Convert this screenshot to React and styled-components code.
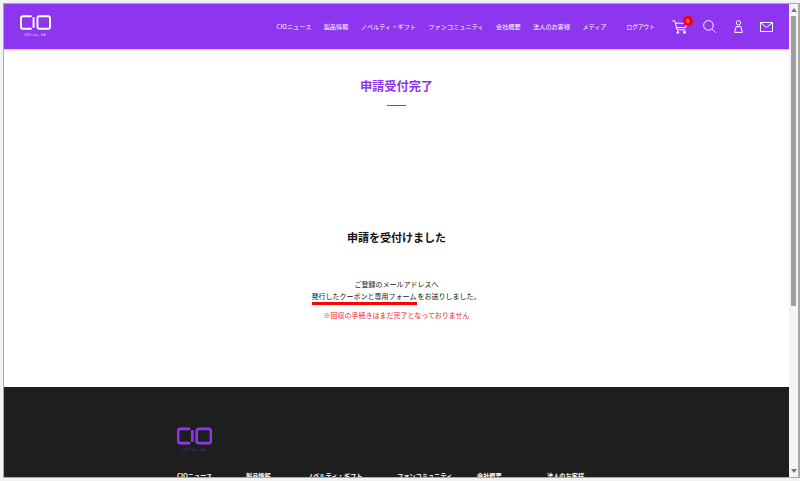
import React from 'react'
import styled, { createGlobalStyle } from 'styled-components'

const Global = createGlobalStyle`
html, body { margin: 0; padding: 0; height: 100%; overflow: hidden; background: #fff; }
body { font-family: "Noto Sans CJK JP", "Liberation Sans", sans-serif; }
`
const Frame = styled.div`
width: 800px;
height: 481px;
box-sizing: border-box;
padding: 3px 0 3px 3px;
background: #f2f2f2;
`
const Window = styled.div`
height: 100%;
box-sizing: border-box;
display: flex;
border: solid #a9a9a9;
border-width: 1px 2px 1px 1px;
background: #fff;
`
const Page = styled.div`
flex: 1;
min-width: 0;
display: flex;
flex-direction: column;
overflow: hidden;
`
const Header = styled.header`
flex: none;
height: 45px;
display: flex;
align-items: center;
justify-content: space-between;
padding: 0 16px 0 16px;
background: #8e35ef;
box-shadow: 0 1px 2px rgba(0,0,0,.25);
`
const LogoBox = styled.div`
display: flex;
flex-direction: column;
align-items: center;
gap: ${p => p.$gap}px;
color: ${p => p.$color};
`
const LogoText = styled.span`
font-size: ${p => p.$size}px;
line-height: 1;
letter-spacing: .2px;
white-space: nowrap;
font-family: "Liberation Sans", sans-serif;
opacity: .9;
`
const Nav = styled.nav`
display: flex;
align-items: center;
`
const NavItem = styled.a`
font-size: 6.2px;
line-height: 10px;
margin-right: 12.3px;
color: #fff;
white-space: nowrap;
`
const LogoutItem = styled(NavItem)`
font-size: 5.7px;
margin-left: 7.5px;
margin-right: 17px;
`
const IconRow = styled.div`
display: flex;
align-items: center;
`
const IconWrap = styled.span`
position: relative;
display: flex;
margin-left: ${p => p.$left || 0}px;
`
const Badge = styled.span`
position: absolute;
top: -4px;
right: -5px;
width: 10px;
height: 10px;
border-radius: 50%;
background: #f00;
color: #fff;
font-size: 5px;
line-height: 10px;
text-align: center;
`
const Main = styled.main`
flex: 1;
min-height: 0;
display: flex;
flex-direction: column;
align-items: center;
`
const Title = styled.h1`
margin: 28px 0 0;
font-size: 12.2px;
line-height: 18px;
font-weight: 700;
color: #8e35ef;
`
const Divider = styled.div`
width: 19px;
height: 1px;
margin-top: 10px;
background: #8e35ef;
`
const Heading = styled.h2`
margin: 123px 0 0;
font-size: 11px;
line-height: 16px;
font-weight: 700;
color: #111;
`
const Message = styled.p`
margin: 33px 0 0;
font-size: 7px;
line-height: 12px;
text-align: center;
color: #111;
`
const Marked = styled.span`
padding: 0 1px 1px 0;
margin-left: -1px;
border-bottom: 3px solid #f00;
`
const Notice = styled.p`
margin: 7px 0 0;
font-size: 7px;
line-height: 12px;
color: #f0202a;
`
const Footer = styled.footer`
flex: none;
height: 90px;
box-sizing: border-box;
padding: 40px 0 0 173px;
background: #1e1e1e;
overflow: hidden;
`
const FooterLogo = styled(LogoBox)`
align-self: flex-start;
width: 35px;
`
const FooterNav = styled.div`
display: grid;
grid-template-columns: 69px 61px 90px 80px 70px auto;
margin-top: 19px;
`
const FooterItem = styled.a`
font-size: 6.2px;
line-height: 10px;
font-weight: 700;
color: #fff;
white-space: nowrap;
`
const Scrollbar = styled.div`
flex: none;
width: 9px;
display: flex;
flex-direction: column;
align-items: center;
background: #f4f4f4;
`
const Arrow = styled.span`
flex: none;
width: 0;
height: 0;
margin: 4px 0;
border-left: 3px solid transparent;
border-right: 3px solid transparent;
border-${p => p.$down ? 'top' : 'bottom'}: 4px solid #777;
`
const Thumb = styled.div`
flex: none;
width: 5px;
height: 290px;
background: #a0a0a0;
`
const Track = styled.div`
flex: 1;
`

const Logo = ({ color, width, height, weight = 2 }) => (
  <svg width={width} height={height} viewBox="0 0 32 15" fill="none" stroke={color} strokeWidth={weight}>
    <path d="M12 1H3Q1 1 1 3V12Q1 14 3 14H12" />
    <path d="M14 2V13" />
    <rect x="18" y="1" width="13" height="13" rx="2" />
  </svg>
)

const Cart = () => (
  <svg width="16" height="14" viewBox="0 0 16 14" fill="none" stroke="#fff" strokeWidth="1">
    <path d="M.3 .8H2.8L5 9.8H13.5" />
    <path d="M3.4 3.2H15L13.5 7.6H4.5" />
    <circle cx="5.8" cy="12.3" r="1" fill="#fff" />
    <circle cx="12.5" cy="12.3" r="1" fill="#fff" />
  </svg>
)
const Search = () => (
  <svg width="13" height="13" viewBox="0 0 13 13" fill="none" stroke="#fff" strokeWidth="1">
    <circle cx="5.4" cy="5.4" r="4.8" />
    <path d="M8.9 8.9L12.7 12.7" />
  </svg>
)
const User = () => (
  <svg width="9" height="13" viewBox="0 0 9 13" fill="none" stroke="#fff" strokeWidth="1">
    <circle cx="4.5" cy="2.8" r="2.2" />
    <path d="M2.2 6.6H6.8L8.4 12.4H.6Z" />
  </svg>
)
const Mail = () => (
  <svg width="13" height="10" viewBox="0 0 13 10" fill="none" stroke="#fff" strokeWidth="1">
    <rect x=".5" y=".5" width="12" height="9" />
    <path d="M.5 .7L6.5 5.4L12.5 .7" />
  </svg>
)

const navLinks = ['CIOニュース', '製品情報', 'ノベルティ・ギフト', 'ファンコミュニティ', '会社概要', '法人のお客様', 'メディア']

export default function App() {
  return (
    <Frame>
      <Global />
      <Window>
        <Page>
          <Header>
            <LogoBox $gap={4} $color="#fff">
              <Logo color="#fff" width={31} height={15} />
              <LogoText $size={3.8}>CIO co., ltd.</LogoText>
            </LogoBox>
            <Nav>
              {navLinks.map(l => <NavItem key={l}>{l}</NavItem>)}
              <LogoutItem>ログアウト</LogoutItem>
              <IconRow>
                <IconWrap><Cart /><Badge>0</Badge></IconWrap>
                <IconWrap $left={15}><Search /></IconWrap>
                <IconWrap $left={18}><User /></IconWrap>
                <IconWrap $left={17}><Mail /></IconWrap>
              </IconRow>
            </Nav>
          </Header>
          <Main>
            <Title>申請受付完了</Title>
            <Divider />
            <Heading>申請を受付けました</Heading>
            <Message>
              ご登録のメールアドレスへ<br />
              <Marked>発行したクーポンと専用フォーム</Marked>をお送りしました。
            </Message>
            <Notice>※回収の手続きはまだ完了となっておりません</Notice>
          </Main>
          <Footer>
            <FooterLogo $gap={3} $color="#7b2fd6">
              <Logo color="#8e35ef" width={35} height={18} weight={2.4} />
              <LogoText $size={4}>CIO co., ltd.</LogoText>
            </FooterLogo>
            <FooterNav>
              {navLinks.slice(0, 6).map(l => <FooterItem key={l}>{l}</FooterItem>)}
            </FooterNav>
          </Footer>
        </Page>
        <Scrollbar>
          <Arrow />
          <Thumb />
          <Track />
          <Arrow $down />
        </Scrollbar>
      </Window>
    </Frame>
  )
}
